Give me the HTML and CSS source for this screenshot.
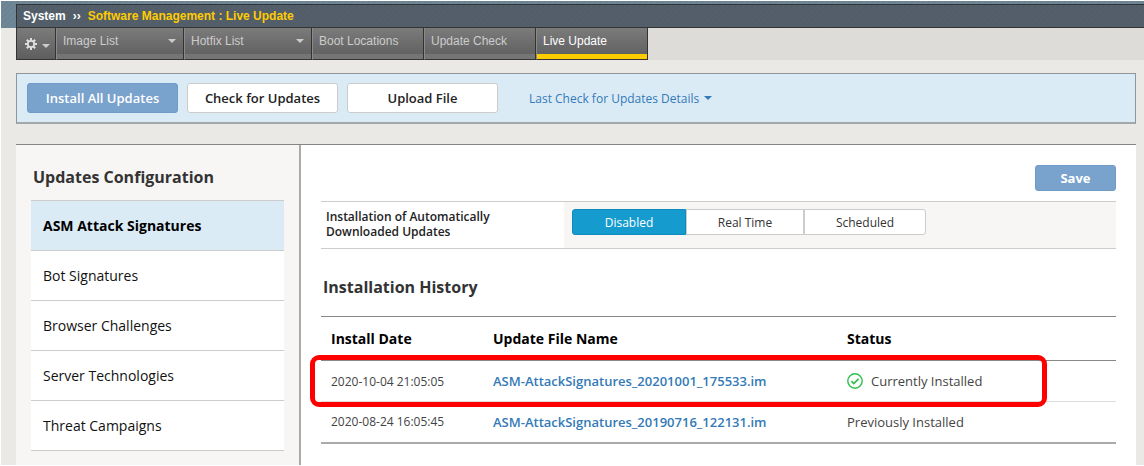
FILE: index.html
```html
<!DOCTYPE html>
<html lang="en">
<head>
<meta charset="utf-8">
<title>Software Management : Live Update</title>
<link rel="stylesheet" href="styles.css">
</head>
<body>
<div class="page">
  <header class="masthead">
    <nav class="crumbs" aria-label="Breadcrumb">
      <span class="crumb-root">System</span>
      <span class="crumb-sep">››</span>
      <span class="crumb-current">Software Management : Live Update</span>
    </nav>
  </header>
  <nav class="tabs" aria-label="Sections">
    <button class="tab tab-gear" type="button" aria-label="Preferences">
      <svg width="14" height="14" viewBox="0 0 14 14" aria-hidden="true">
        <g stroke="#dedede" stroke-width="2">
          <path d="M7 1v12M1 7h12M2.8 2.8l8.4 8.4M11.2 2.8l-8.4 8.4"/>
        </g>
        <circle cx="7" cy="7" r="3.2" fill="#686868" stroke="#dedede" stroke-width="1.8"/>
      </svg>
      <span class="caret"></span>
    </button>
    <a class="tab tab-wide" href="#images">Image List<span class="caret"></span></a>
    <a class="tab tab-wide" href="#hotfixes">Hotfix List<span class="caret"></span></a>
    <a class="tab" href="#boot">Boot Locations</a>
    <a class="tab" href="#check">Update Check</a>
    <a class="tab tab-active" href="#live" aria-current="page">Live Update</a>
  </nav>
  <div class="toolbar">
    <button class="btn btn-primary" type="button">Install All Updates</button>
    <button class="btn" type="button">Check for Updates</button>
    <button class="btn" type="button">Upload File</button>
    <a class="details-link" href="#details">Last Check for Updates Details<span class="caret"></span></a>
  </div>
  <div class="workspace">
    <aside class="sidebar">
      <h2 class="title">Updates Configuration</h2>
      <ul class="config-list">
        <li><a class="config config-active" href="#asm">ASM Attack Signatures</a></li>
        <li><a class="config" href="#bot">Bot Signatures</a></li>
        <li><a class="config" href="#browser">Browser Challenges</a></li>
        <li><a class="config" href="#server">Server Technologies</a></li>
        <li><a class="config" href="#threat">Threat Campaigns</a></li>
      </ul>
    </aside>
    <main class="content">
      <div class="actions"><button class="btn btn-primary btn-save" type="button">Save</button></div>
      <div class="setting">
        <div class="setting-label" id="mode-label">Installation of Automatically<br>Downloaded Updates</div>
        <div class="setting-value">
          <div class="segmented" role="group" aria-labelledby="mode-label">
            <button class="segment segment-on" type="button" aria-pressed="true">Disabled</button>
            <button class="segment" type="button" aria-pressed="false">Real Time</button>
            <button class="segment" type="button" aria-pressed="false">Scheduled</button>
          </div>
        </div>
      </div>
      <h2 class="title history-title">Installation History</h2>
      <div class="history-wrap">
        <table class="history">
          <thead>
            <tr><th class="col-date">Install Date</th><th class="col-file">Update File Name</th><th>Status</th></tr>
          </thead>
          <tbody>
            <tr>
              <td class="date">2020-10-04 21:05:05</td>
              <td><a class="file" href="#f1">ASM-AttackSignatures_20201001_175533.im</a></td>
              <td><span class="status">
                <svg width="16" height="16" viewBox="0 0 16 16" fill="none" stroke="#2fbf4a" stroke-width="1.4" aria-hidden="true">
                  <circle cx="8" cy="8" r="7.2"/>
                  <path d="M4.4 8.2l2.4 2.4 4.8-4.8" stroke-width="1.7"/>
                </svg>Currently Installed</span></td>
            </tr>
            <tr>
              <td class="date">2020-08-24 16:05:45</td>
              <td><a class="file" href="#f2">ASM-AttackSignatures_20190716_122131.im</a></td>
              <td>Previously Installed</td>
            </tr>
          </tbody>
        </table>
        <div class="highlight"></div>
      </div>
    </main>
  </div>
</div>
</body>
</html>
```
FILE: styles.css
```css
* { box-sizing: border-box; }
body {
  margin: 0;
  padding: 1px 0 0 1px;
  background: #fff;
  font-family: "Open Sans", sans-serif;
  font-size: 13px;
  color: #333;
}
button { font-family: inherit; cursor: pointer; }
a { text-decoration: none; }
.page {
  display: flex;
  flex-direction: column;
  min-height: calc(100vh - 2px);
  background: #eae9e5;
}
.masthead {
  padding: 3px 0 0 15px;
  background: repeating-linear-gradient(135deg, #6c8391 0 2px, #70879a 2px 4px);
}
.crumbs {
  display: flex;
  align-items: center;
  gap: 7px;
  height: 24px;
  padding-left: 6px;
  border: 1px solid #333436;
  border-right: 0;
  background: repeating-linear-gradient(135deg, #515d69 0 2px, #545f69 2px 4px);
  font: bold 12px "Liberation Sans", sans-serif;
  color: #fff;
}
.crumb-current { color: #fc0; }
.tabs {
  display: flex;
  height: 32px;
  margin-left: 15px;
  background: #dddcd8;
  font: 12px "Liberation Sans", sans-serif;
}
.tab {
  display: flex;
  justify-content: space-between;
  width: 112px;
  padding: 6px 7px 0 6px;
  border: 1px solid #333;
  border-top: 0;
  border-left-color: #8a8a8a;
  background: linear-gradient(#7b7b7b, #626262 26px, #757575 26px);
  color: #ccc;
}
.tab-wide { width: 128px; }
.tab-gear {
  align-items: center;
  width: 40px;
  padding: 0 5px 0 7px;
  border-left-color: #333;
  background: linear-gradient(#7b7b7b, #5e5e5e);
}
.tab-active {
  background: linear-gradient(#7b7b7b, #626262 26px, #fc0 26px);
  color: #fff;
}
.caret {
  width: 0;
  height: 0;
  border: 4px solid transparent;
  border-top-color: currentColor;
  border-bottom: 0;
}
.tab .caret { margin-top: 5px; }
.toolbar {
  display: flex;
  align-items: center;
  gap: 9px;
  height: 51px;
  margin: 13px 8px 0 15px;
  padding-left: 10px;
  border: 1px solid #8f9698;
  border-bottom: 2px solid #a3a8aa;
  background: #dbebf6;
}
.btn {
  width: 151px;
  height: 30px;
  padding: 0;
  border: 1px solid #ccc;
  border-radius: 3px;
  background: #fff;
  font-size: 13px;
  font-weight: 600;
  color: #222;
}
.btn-primary {
  border-color: #6f9bc8;
  background: #79a2cd;
  color: #fff;
}
.details-link {
  display: flex;
  align-items: center;
  gap: 5px;
  margin-left: 22px;
  font-size: 12px;
  color: #337ab7;
}
.workspace {
  display: flex;
  flex: 1;
  margin: 20px 8px 0 15px;
  border-top: 1px solid #858585;
  background: #fff;
}
.sidebar {
  flex: none;
  width: 285px;
  padding: 21px 15px 12px;
  border-right: 2px solid #aaa;
  background: #f7f6f4;
}
.title {
  margin: 0;
  padding-left: 2px;
  font-size: 16px;
  line-height: 22px;
  color: #333;
}
.config-list {
  margin: 12px 0 0;
  padding: 0;
  border-top: 1px solid #ccc;
  list-style: none;
}
.config {
  display: flex;
  align-items: center;
  height: 50px;
  padding: 0 12px;
  border-bottom: 1px solid #ccc;
  background: #fff;
  font-size: 14px;
  color: #111;
}
.config-active { background: #dbebf6; font-weight: bold; color: #000; }
.content { flex: 1; padding: 20px 20px 0; }
.actions { display: flex; justify-content: flex-end; }
.btn-save { width: 81px; height: 26px; font-weight: bold; }
.setting {
  display: flex;
  height: 48px;
  margin-top: 10px;
  border-top: 1px solid #ccc;
  border-bottom: 1px solid #ccc;
}
.setting-label {
  width: 243px;
  padding: 7px 5px;
  font-size: 12px;
  font-weight: 600;
  line-height: 15px;
  color: #222;
}
.setting-value { flex: 1; padding: 7px 8px; background: #f7f6f4; }
.segmented { display: flex; }
.segment {
  width: 118px;
  height: 26px;
  padding: 0;
  border: 1px solid #ccc;
  background: #fff;
  font-size: 12px;
  color: #333;
}
.segment:first-child { width: 114px; border-radius: 3px 0 0 3px; }
.segment:last-child { width: 122px; border-radius: 0 3px 3px 0; }
.segment-on { border-color: #0f8abc; background: #169bce; color: #fff; }
.history-title { margin: 27px 0 18px; }
.history-wrap { position: relative; }
.history {
  width: 100%;
  border-collapse: collapse;
  table-layout: fixed;
  border-top: 1px solid #888;
  border-bottom: 2px solid #aaa;
}
.col-date { width: 162px; }
.col-file { width: 354px; }
.history th {
  height: 44px;
  padding: 0 10px;
  border-bottom: 1px solid #888;
  font-size: 14px;
  text-align: left;
  color: #000;
}
.history td {
  height: 41px;
  padding: 0 10px;
  border-bottom: 1px solid #ddd;
  color: #444;
}
.history .date { font-size: 12px; }
.file { font-weight: 600; color: #337ab7; }
.status { display: flex; align-items: center; gap: 8px; }
.highlight {
  position: absolute;
  top: 39px;
  left: -11px;
  right: 69px;
  height: 52px;
  border: 5px solid #f00;
  border-radius: 9px;
  pointer-events: none;
}
```
